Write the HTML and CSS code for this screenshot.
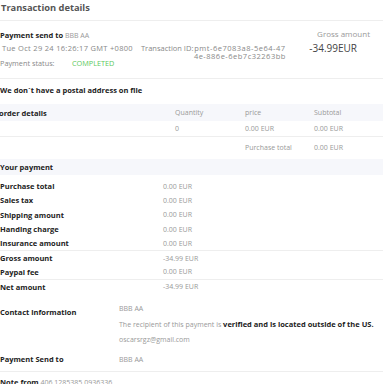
FILE: index.html
```html
<!DOCTYPE html>
<html lang="en">
<head>
    <meta charset="UTF-8">
    <meta name="viewport" content="width=device-width, initial-scale=1.0">
    <title>Transaction details</title>
    <link rel="stylesheet" href="styles.css">
</head>
<body>
    <div class="page">
        <h1 class="title">Transaction details</h1>

        <div class="summary">
            <div class="summary-left">
                <div class="send-to"><b>Payment send to</b> <span class="muted">BBB AA</span></div>
                <div class="meta">
                    <span class="date">Tue Oct 29 24 16:26:17 GMT +0800</span>
                    <span class="txn-label">Transaction ID:</span>
                    <span class="txn-id">pmt-6e7083a8-5e64-474e-886e-6eb7c32263bb</span>
                </div>
                <div class="status">
                    <span class="status-label">Payment status:</span>
                    <span class="status-value">COMPLETED</span>
                </div>
            </div>
            <div class="summary-right">
                <div class="gross-label">Gross amount</div>
                <div class="gross-value">-34.99EUR</div>
            </div>
        </div>

        <p class="postal">We don`t have a postal address on file</p>

        <div class="order">
            <div class="order-row order-head">
                <b>order details</b>
                <span>Quantity</span>
                <span>price</span>
                <span>Subtotal</span>
            </div>
            <div class="order-row order-line">
                <span></span>
                <span>0</span>
                <span>0.00 EUR</span>
                <span>0.00 EUR</span>
            </div>
            <div class="order-row order-total">
                <span></span>
                <span></span>
                <span>Purchase total</span>
                <span>0.00 EUR</span>
            </div>
        </div>

        <div class="section-head">Your payment</div>

        <div class="payment">
            <div class="pay-row"><b>Purchase total</b><span>0.00 EUR</span></div>
            <div class="pay-row"><b>Sales tax</b><span>0.00 EUR</span></div>
            <div class="pay-row"><b>Shipping amount</b><span>0.00 EUR</span></div>
            <div class="pay-row"><b>Handing charge</b><span>0.00 EUR</span></div>
            <div class="pay-row"><b>Insurance amount</b><span>0.00 EUR</span></div>
            <div class="pay-row split"><b>Gross amount</b><span>-34.99 EUR</span></div>
            <div class="pay-row"><b>Paypal fee</b><span>0.00 EUR</span></div>
            <div class="pay-row split"><b>Net amount</b><span>-34.99 EUR</span></div>
        </div>

        <div class="info">
            <b class="info-label">Contact information</b>
            <div class="info-body">
                <div>BBB AA</div>
                <div>The recipient of this payment is <b>verified and is located outside of the US.</b></div>
                <div>oscarsrgz@gmail.com</div>
            </div>
        </div>

        <div class="info info-last">
            <b class="info-label">Payment Send to</b>
            <div class="info-body">
                <div>BBB AA</div>
            </div>
        </div>

        <div class="note"><b>Note from</b> <span class="muted">406 1285385 0936336</span></div>
    </div>
</body>
</html>
```

FILE: styles.css
```css
body {
    margin: 0;
    font-family: "Open Sans", Arial, sans-serif;
    font-size: 7px;
    color: #999;
    background-color: #fff;
}
b {
    color: #222;
    font-weight: 700;
    font-size: 7.5px;
}
.page {
    margin-left: -1px;
}
.muted {
    color: #999;
}
.title {
    margin: 0;
    padding: 1px 0 0 2px;
    height: 19px;
    font-size: 9.3px;
    line-height: 14px;
    color: #555;
    font-weight: 700;
}
.summary {
    display: flex;
    justify-content: space-between;
    border-top: 1px solid #eee;
    border-bottom: 1px solid #eee;
    padding: 8px 0 10px 1px;
}
.summary-left {
    flex: 1;
}
.send-to {
    line-height: 12px;
}
.meta {
    display: flex;
    align-items: flex-start;
    margin-top: 2px;
    line-height: 8px;
    font-size: 7.5px;
    color: #888;
    white-space: nowrap;
}
.date {
    flex-shrink: 0;
    padding-left: 2px;
    margin-right: 8px;
    letter-spacing: 0.3px;
}
.txn-label {
    flex-shrink: 0;
}
.txn-id {
    flex-shrink: 0;
    width: 93px;
    text-align: center;
    white-space: normal;
    word-break: break-all;
    letter-spacing: 0.5px;
}
.status {
    margin-top: -2px;
    line-height: 10px;
    font-size: 7.3px;
    color: #888;
}
.status-label {
    display: inline-block;
    width: 70px;
}
.status-value {
    color: #5cc95c;
}
.summary-right {
    flex-shrink: 0;
    padding-right: 13px;
    text-align: right;
}
.gross-label {
    font-size: 8px;
    line-height: 10px;
    color: #999;
}
.gross-value {
    margin-top: 3px;
    margin-right: 13px;
    font-size: 10px;
    line-height: 12px;
    color: #444;
}
.postal {
    margin: 0;
    padding: 6px 0 0 1px;
    height: 19px;
    font-weight: 700;
    font-size: 7.5px;
    color: #222;
}
.order-row {
    display: grid;
    grid-template-columns: 176px 70px 69px 1fr;
    align-items: center;
}
.order-head {
    background-color: #f6f7fb;
    height: 17px;
}
.order-line {
    height: 15px;
    border-bottom: 1px solid #eee;
}
.order-total {
    height: 20px;
}
.section-head {
    margin-top: 2px;
    height: 16px;
    line-height: 16px;
    padding-left: 1px;
    background-color: #f6f7fb;
    font-weight: 700;
    font-size: 7.5px;
    color: #222;
}
.payment {
    padding-top: 4px;
}
.pay-row {
    display: grid;
    grid-template-columns: 163px 1fr;
    align-items: center;
    box-sizing: border-box;
    height: 14.3px;
    padding-left: 1px;
}
.split {
    border-top: 1px solid #eee;
}
.info {
    display: grid;
    grid-template-columns: 119px 1fr;
    align-items: start;
    padding: 8px 0 0 1px;
}
.info-label {
    padding-top: 4px;
    line-height: 15px;
}
.info-body div {
    line-height: 15.5px;
}
.info-last {
    padding-top: 4px;
    padding-bottom: 4px;
    border-bottom: 1px solid #eee;
}
.info-last .info-label {
    padding-top: 0;
}
.note {
    padding: 5px 0 0 1px;
}
```
